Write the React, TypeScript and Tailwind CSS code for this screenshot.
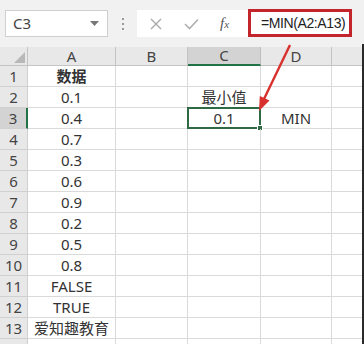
import React from "react";

const rows: { a: string; c?: string; d?: string; bold?: boolean }[] = [
  { a: "数据", bold: true },
  { a: "0.1", c: "最小值" },
  { a: "0.4", c: "0.1", d: "MIN" },
  { a: "0.7" },
  { a: "0.3" },
  { a: "0.6" },
  { a: "0.9" },
  { a: "0.2" },
  { a: "0.5" },
  { a: "0.8" },
  { a: "FALSE" },
  { a: "TRUE" },
  { a: "爱知趣教育" },
  { a: "" },
];

const cell =
  "h-[21px] border-r border-b border-[#dadada] flex items-center justify-center text-[15px] text-[#333] leading-none";

export default function App() {
  return (
    <div
      className="relative w-[364px] h-[344px] overflow-hidden bg-white"
      style={{ fontFamily: '"Noto Sans", "Noto Sans CJK SC", sans-serif' }}
    >
      {/* Formula bar */}
      <div className="h-[47px] bg-[#f1f1f1] flex items-start pt-[9px]">
        <div className="ml-[5px] mt-px w-[103px] h-[27px] bg-white border border-[#cfcfcf] flex items-center justify-between pl-[7px] pr-[8px]">
          <span className="text-[15px] text-[#444]">C3</span>
          <svg width="9" height="6" viewBox="0 0 9 6">
            <path d="M0 0 L9 0 L4.5 5 Z" fill="#777" />
          </svg>
        </div>
        <div className="w-[29px] h-[29px] flex flex-col items-center justify-center gap-[3px]">
          <div className="w-[2px] h-[2px] bg-[#9a9a9a]" />
          <div className="w-[2px] h-[2px] bg-[#9a9a9a]" />
          <div className="w-[2px] h-[2px] bg-[#9a9a9a]" />
        </div>
        <div className="mt-px w-[111px] h-[27px] bg-white flex items-center">
          <svg className="ml-[13px]" width="12" height="12" viewBox="0 0 12 12">
            <path d="M1 1 L11 11 M11 1 L1 11" stroke="#a9a9a9" strokeWidth="1.4" />
          </svg>
          <svg className="ml-[22px]" width="15" height="12" viewBox="0 0 15 12">
            <path d="M1 6 L5.5 10.5 L14 1.5" stroke="#b0b0b0" strokeWidth="1.6" fill="none" />
          </svg>
          <span
            className="ml-[21px] text-[15px] italic text-[#555]"
            style={{ fontFamily: '"Liberation Serif", serif' }}
          >
            f<span className="text-[11px]">x</span>
          </span>
        </div>
        <div className="w-[104px] h-[28px] bg-white border-[3px] border-[#c4252c] flex items-center pl-[10px] overflow-hidden">
          <span
            className="text-[14px] text-[#222] whitespace-nowrap tracking-[-0.4px]"
            style={{ fontFamily: '"Liberation Sans", sans-serif' }}
          >
            =MIN(A2:A13)
          </span>
        </div>
      </div>

      {/* Sheet grid */}
      <div className="grid grid-cols-[28px_88px_72px_73px_71px_1fr]">
        {/* header row */}
        <div className="h-[19px] bg-[#e8e8e8] border-r border-b border-[#c4c4c4] flex items-end justify-end pr-[2px] pb-[2px]">
          <svg width="11" height="11" viewBox="0 0 11 11">
            <path d="M11 0 L11 11 L0 11 Z" fill="#b8b8b8" />
          </svg>
        </div>
        {["A", "B", "C", "D", ""].map((h) => (
          <div
            key={h || "E"}
            className={
              h === "C"
                ? "h-[19px] bg-[#d3d3d3] border-r border-[#bdbdbd] border-b-2 border-b-[#217346] flex items-center justify-center text-[15px] text-[#444] leading-none"
                : "h-[19px] bg-[#e8e8e8] border-r border-b border-[#c4c4c4] flex items-center justify-center text-[15px] text-[#444] leading-none"
            }
          >
            {h}
          </div>
        ))}

        {rows.map((r, i) => {
          const n = i + 1;
          const sel = n === 3;
          return (
            <React.Fragment key={n}>
              <div
                className={
                  sel
                    ? "h-[21px] bg-[#d3d3d3] border-b border-[#d0d0d0] border-r-2 border-r-[#217346] flex items-center justify-center text-[15px] text-[#444] leading-none"
                    : "h-[21px] bg-[#e8e8e8] border-b border-r border-[#d0d0d0] flex items-center justify-center text-[15px] text-[#444] leading-none"
                }
              >
                {n <= 13 ? n : ""}
              </div>
              <div className={cell + (r.bold ? " font-bold" : "")}>{r.a}</div>
              <div className={cell}></div>
              <div className={cell + " relative"}>
                {r.c}
                {sel && (
                  <div className="absolute -left-[1px] -top-[1px] w-[74px] h-[22px] border-2 border-[#2f6a45]">
                    <div className="absolute -right-[4px] -bottom-[4px] w-[6px] h-[6px] bg-[#2f6a45] border border-white" />
                  </div>
                )}
              </div>
              <div className={cell}>{r.d}</div>
              <div className={cell}></div>
            </React.Fragment>
          );
        })}
      </div>

      {/* dark right edge */}
      <div className="absolute right-0 top-[44px] w-[2px] h-[300px] bg-[#2a2a2a]" />

      {/* red arrow */}
      <svg className="absolute left-0 top-0 pointer-events-none" width="364" height="344" viewBox="0 0 364 344">
        <line x1="290" y1="45" x2="264" y2="99" stroke="#d8302d" strokeWidth="2.4" />
        <polygon points="259,111 269.5,100.5 259.8,96" fill="#d8302d" />
      </svg>
    </div>
  );
}
